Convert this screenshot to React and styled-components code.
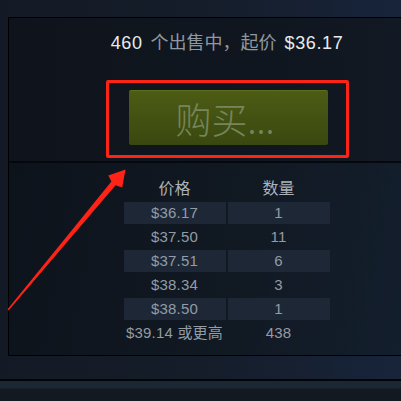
import React from 'react'
import styled, { createGlobalStyle } from 'styled-components'

const GlobalStyle = createGlobalStyle`
  html, body {
    margin: 0;
    padding: 0;
    background: #131a24;
  }
  body {
    font-family: "Liberation Sans", "Noto Sans CJK SC", sans-serif;
  }
`

const Page = styled.div`
  position: relative;
  width: 401px;
  height: 401px;
  overflow: hidden;
  display: flex;
  flex-direction: column;
  padding: 17px 0 0 8px;
  box-sizing: border-box;
  background: linear-gradient(90deg, #141a25 0%, #151d2a 50%, #17243a 100%);
`

const Panel = styled.div`
  width: 438px;
  flex-shrink: 0;
  box-sizing: border-box;
  border: 1px solid #000;
  background: #0f151e;
`

const TopSection = styled.div`
  display: flex;
  flex-direction: column;
  align-items: center;
  padding: 13px 0 3px;
  background: linear-gradient(90deg, #0f141c 0%, #10161f 60%, #121a25 100%);
`

const Summary = styled.div`
  font-size: 18px;
  line-height: 24px;
  color: #8f98a0;
  margin-bottom: 25px;
  white-space: nowrap;
  display: flex;
  gap: 8px;
`

const Bright = styled.span`
  color: #e8ebee;
  letter-spacing: 0.6px;
`

const Highlight = styled.div`
  border: 3px solid #fd2317;
  border-radius: 2px;
  padding: 7px 18px 10px 20px;
`

const BuyButton = styled.div`
  width: 199px;
  height: 55px;
  box-sizing: border-box;
  border-radius: 2px;
  border-top: 1px solid #5d6f1f;
  background: linear-gradient(180deg, #4c5c14 0%, #3a4810 100%);
  display: flex;
  align-items: center;
  justify-content: center;
  font-family: "Noto Sans CJK SC", "Liberation Sans", sans-serif;
  font-weight: 300;
  font-size: 36px;
  color: #76865a;
  padding-right: 6px;
`

const BottomSection = styled.div`
  border-top: 2px solid #05080c;
  padding: 16px 0 11px;
  display: flex;
  justify-content: center;
  background: linear-gradient(100deg, #0d131b 0%, #111923 55%, #142030 100%);
`

const Table = styled.div`
  display: grid;
  grid-template-columns: 102px 102px;
  column-gap: 2px;
  row-gap: 2px;
  margin-left: -1px;
`

const HeadCell = styled.div`
  text-align: center;
  font-size: 16px;
  line-height: 20px;
  color: #acb2b8;
  margin-bottom: 1px;
`

const Cell = styled.div`
  height: 22px;
  line-height: 22px;
  text-align: center;
  font-size: 15px;
  letter-spacing: 0.2px;
  color: #939ca5;
  background: ${p => (p.$shaded ? '#1d2736' : 'transparent')};
  white-space: nowrap;
`

const Gap = styled.div`
  height: 23px;
  flex-shrink: 0;
  margin-left: -8px;
`

const FooterBar = styled.div`
  margin-left: -8px;
  flex: 1;
  border-top: 2px solid #020406;
  background: linear-gradient(180deg, #1c2736 0px, #1c2736 7px, #141a22 8px, #131920 100%);
`

const Overlay = styled.svg`
  position: absolute;
  left: 0;
  top: 0;
  pointer-events: none;
`

const rows = [
  ['$36.17', '1'],
  ['$37.50', '11'],
  ['$37.51', '6'],
  ['$38.34', '3'],
  ['$38.50', '1'],
  ['$39.14 或更高', '438'],
]

export default function App() {
  return (
    <>
      <GlobalStyle />
      <Page>
        <Panel>
          <TopSection>
            <Summary>
              <Bright>460</Bright>
              <span>个出售中，起价</span>
              <Bright>$36.17</Bright>
            </Summary>
            <Highlight>
              <BuyButton>购买...</BuyButton>
            </Highlight>
          </TopSection>
          <BottomSection>
            <Table>
              <HeadCell>价格</HeadCell>
              <HeadCell>数量</HeadCell>
              {rows.map(([price, qty], i) => (
                <React.Fragment key={i}>
                  <Cell $shaded={i % 2 === 0 && i < 5}>{price}</Cell>
                  <Cell $shaded={i % 2 === 0 && i < 5}>{qty}</Cell>
                </React.Fragment>
              ))}
            </Table>
          </BottomSection>
        </Panel>
        <Gap />
        <FooterBar />
        <Overlay width="401" height="401" viewBox="0 0 401 401">
          <polygon
            fill="#fd2317"
            points="125.5,169.5 108.3,175.4 111.4,181.6 7.6,309.3 8.6,310.6 115.6,185.2 122.2,187.6"
          />
        </Overlay>
      </Page>
    </>
  )
}
